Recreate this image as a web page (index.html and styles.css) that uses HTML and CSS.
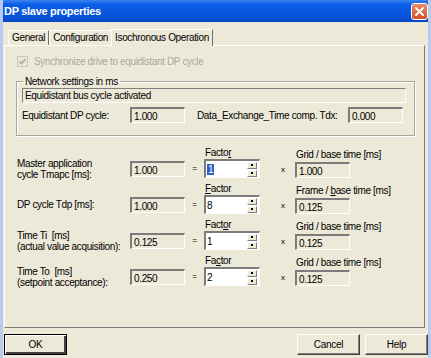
FILE: index.html
```html
<!DOCTYPE html>
<html>
<head>
    <title>DP slave properties</title>
    <link rel="stylesheet" href="styles.css">
</head>
<body>

<div class="window">
    <div class="titlebar">
        <span class="title">DP slave properties</span>
        <span class="close">
            <svg width="9" height="9" viewBox="0 0 9 9"><path d="M1 1L8 8M8 1L1 8" stroke="#fff" stroke-width="1.8" stroke-linecap="round"/></svg>
        </span>
    </div>

    <div class="tabs">
        <span class="tab">General</span>
        <span class="tab next">Configuration</span>
        <span class="tab active">Isochronous Operation</span>
    </div>

    <div class="panel">
        <div class="check">
            <span class="box">
                <svg width="9" height="9" viewBox="0 0 9 9"><path d="M1.5 4.5L3.5 6.5L7.5 2" stroke="#aca899" stroke-width="1.6" fill="none"/></svg>
            </span>
            Synchronize drive to equidistant DP cycle
        </div>

        <fieldset class="group">
            <legend>Network settings in ms</legend>
            <div class="status">Equidistant bus cycle activated</div>
            <div class="net-row">
                <span class="net-label">Equidistant DP cycle:</span>
                <span class="field">1.000</span>
                <span class="net-label tdx">Data_Exchange_Time comp. Tdx:</span>
                <span class="field">0.000</span>
            </div>
        </fieldset>

        <div class="calc">
            <!-- row 1 -->
            <div class="row-label">Master application<br>cycle Tmapc [ms]:</div>
            <div class="cell"><span class="field">1.000</span></div>
            <div class="op">=</div>
            <div class="stack">
                <span class="small">Facto<u>r</u></span>
                <span class="spin"><span class="value"><span class="sel">1</span></span><span class="arrows"><i class="up"></i><i class="down"></i></span></span>
            </div>
            <div class="op times">x</div>
            <div class="stack">
                <span class="small">Grid / base time [ms]</span>
                <span class="field">1.000</span>
            </div>

            <!-- row 2 -->
            <div class="row-label">DP cycle Tdp [ms]:</div>
            <div class="cell"><span class="field">1.000</span></div>
            <div class="op">=</div>
            <div class="stack">
                <span class="small"><u>F</u>actor</span>
                <span class="spin"><span class="value">8</span><span class="arrows"><i class="up"></i><i class="down"></i></span></span>
            </div>
            <div class="op times">x</div>
            <div class="stack">
                <span class="small">Frame / <u>b</u>ase time [ms]</span>
                <span class="field">0.125</span>
            </div>

            <!-- row 3 -->
            <div class="row-label">Time Ti &nbsp;[ms]<br>(actual value acquisition):</div>
            <div class="cell"><span class="field">0.125</span></div>
            <div class="op">=</div>
            <div class="stack">
                <span class="small">Fact<u>o</u>r</span>
                <span class="spin"><span class="value">1</span><span class="arrows"><i class="up"></i><i class="down"></i></span></span>
            </div>
            <div class="op times">x</div>
            <div class="stack">
                <span class="small">Grid / base time [ms]</span>
                <span class="field">0.125</span>
            </div>

            <!-- row 4 -->
            <div class="row-label">Time To &nbsp;[ms]<br>(setpoint acceptance):</div>
            <div class="cell"><span class="field">0.250</span></div>
            <div class="op">=</div>
            <div class="stack">
                <span class="small">Fa<u>c</u>tor</span>
                <span class="spin"><span class="value">2</span><span class="arrows"><i class="up"></i><i class="down"></i></span></span>
            </div>
            <div class="op times">x</div>
            <div class="stack">
                <span class="small">Grid / base time [ms]</span>
                <span class="field">0.125</span>
            </div>
        </div>
    </div>

    <div class="buttons">
        <button class="btn default">OK</button>
        <span class="spacer"></span>
        <button class="btn">Cancel</button>
        <button class="btn">Help</button>
    </div>
</div>

</body>
</html>
```

FILE: styles.css
```css
/* XP style dialog */
body {
    margin: 0;
    background: #ece9d8;
    font-family: "Liberation Sans", Arial, sans-serif;
    font-size: 10px;
    letter-spacing: -0.35px;
    color: #000;
}
.window {
    width: 431px;
    height: 358px;
    overflow: hidden;
    box-sizing: border-box;
    border-left: 3px solid #b8cbee;
    border-right: 3px solid #b8cbee;
    background: #ece9d8;
    display: flex;
    flex-direction: column;
}
.titlebar {
    height: 22px;
    margin: 0 -3px;
    background: linear-gradient(#3b83f0, #0a5ee6 20%, #0853da 75%, #0746c2);
    display: flex;
    align-items: center;
    padding: 0 3px 0 4px;
}
.title {
    flex: 1;
    color: #fff;
    font-weight: bold;
    font-size: 11px;
    letter-spacing: -0.3px;
}
.close {
    width: 15px;
    height: 15px;
    border: 1px solid #fff;
    border-radius: 3px;
    background: linear-gradient(#e98a6c, #d3502c);
    display: flex;
    align-items: center;
    justify-content: center;
}

/* tabs */
.tabs {
    height: 17px;
    margin-top: 6px;
    padding-left: 5px;
    display: flex;
    align-items: flex-end;
}
.tab {
    height: 14px;
    line-height: 14px;
    padding: 0 3px;
    border-top: 1px solid #fff;
    border-left: 1px solid #fff;
    border-right: 1px solid #707070;
}
.tab.next {
    border-right: none;
    padding-right: 3px;
}
.tab.active {
    height: 16px;
    line-height: 16px;
    padding: 0 3px;
    margin-bottom: -1px;
    background: #ece9d8;
    position: relative;
    z-index: 1;
}

/* panel */
.panel {
    height: 283px;
    margin-left: 1px;
    width: 421px;
    box-sizing: border-box;
    border-top: 1px solid #fff;
    border-left: 1px solid #fff;
    border-right: 1px solid #7a7a7a;
    border-bottom: 1px solid #7a7a7a;
    padding: 9px 0 0 12px;
}
.check {
    display: flex;
    align-items: center;
    gap: 6px;
    color: #aca899;
    height: 12px;
}
.box {
    width: 9px;
    height: 9px;
    border: 1px solid #c9c7ba;
    display: flex;
}
.group {
    margin: 9px 0 0 -1px;
    width: 399px;
    box-sizing: border-box;
    border: 1px solid #a6a6a0;
    box-shadow: inset 1px 1px #fff, 1px 1px #fff;
    padding: 1px 8px 12px 5px;
}
.group legend {
    padding: 0 2px;
    margin-left: 1px;
}
.status {
    height: 13px;
    line-height: 13px;
    border-top: 1px solid #808080;
    border-left: 1px solid #808080;
    border-bottom: 1px solid #fff;
    border-right: 1px solid #fff;
    padding-left: 2px;
}
.net-row {
    display: flex;
    align-items: center;
    margin-top: 4px;
}
.net-label {
    width: 108px;
}
.net-label.tdx {
    width: 151px;
    padding-left: 12px;
}
.field {
    display: block;
    width: 55px;
    height: 16px;
    line-height: 15px;
    box-sizing: border-box;
    padding-left: 2px;
    border-top: 2px solid #7c7c7c;
    border-left: 2px solid #7c7c7c;
    border-bottom: 1px solid #fff;
    border-right: 1px solid #fff;
    background: #ece9d8;
}

/* calculation grid */
.calc {
    margin-top: 11px;
    display: grid;
    grid-template-columns: 113px 55px 19px 56px 35px 57px;
    row-gap: 5px;
    align-items: end;
}
.row-label {
    height: 19px;
    display: flex;
    align-items: center;
    line-height: 11px;
    white-space: nowrap;
}
.cell {
    height: 19px;
    display: flex;
    align-items: center;
}
.op {
    height: 19px;
    line-height: 19px;
    text-align: center;
    font-size: 8px;
}
.op.times {
    text-align: left;
    padding-left: 21px;
    line-height: 22px;
}
.stack {
    display: flex;
    flex-direction: column;
}
.small {
    height: 12px;
    line-height: 12px;
    white-space: nowrap;
    padding-left: 1px;
}
.stack .field {
    margin-top: 1px;
}
.spin {
    height: 19px;
    width: 56px;
    box-sizing: border-box;
    background: #fff;
    border-top: 2px solid #7c7c7c;
    border-left: 2px solid #7c7c7c;
    border-bottom: 1px solid #fff;
    border-right: 1px solid #fff;
    display: flex;
    align-items: center;
}
.value {
    flex: 1;
    padding-left: 1px;
}
.sel {
    background: #2f5fbf;
    color: #fff;
    padding: 0 1px;
}
.arrows {
    width: 10px;
    height: 15px;
    margin-right: 2px;
    display: flex;
    flex-direction: column;
    gap: 1px;
}
.arrows i {
    flex: 1;
    background: #ece9d8;
    border: 1px solid #fff;
    border-right-color: #808080;
    border-bottom-color: #808080;
    display: flex;
    align-items: center;
    justify-content: center;
}
.arrows i::after {
    content: "";
    width: 2px;
    height: 2px;
    background: #000;
}

/* buttons */
.buttons {
    height: 21px;
    margin-top: 6px;
    display: flex;
    gap: 5px;
    padding-left: 1px;
}
.spacer {
    flex: 1;
}
.btn {
    width: 63px;
    height: 21px;
    font-family: inherit;
    font-size: 10px;
    letter-spacing: -0.3px;
    background: #ece9d8;
    border: 1px solid #fff;
    border-right-color: #404040;
    border-bottom-color: #404040;
    box-shadow: inset -1px -1px #808080;
    padding: 0;
}
.btn.default {
    border: 1px solid #000;
    box-shadow: inset 1px 1px #fff, inset -2px -2px #404040;
}
```
